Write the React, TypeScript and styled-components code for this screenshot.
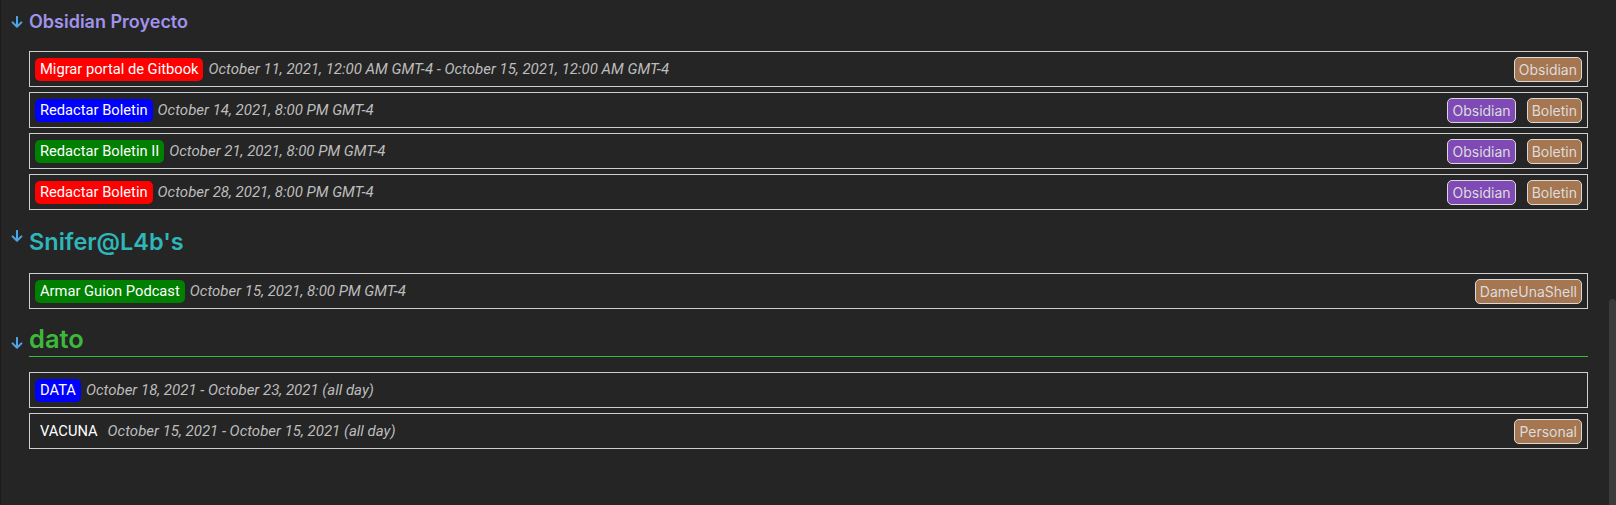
import React from "react";
import styled, { createGlobalStyle } from "styled-components";

const Global = createGlobalStyle`
  html, body { margin: 0; padding: 0; background: #252525; }
  body { font-family: Inter, "Noto Sans", sans-serif; }
`;

const Page = styled.div`
  display: flex;
  height: 505px;
  background: #252525;
  border-left: 1px solid #1b1b1b;
  box-sizing: border-box;
  overflow: hidden;
`;

const Main = styled.main`
  flex: 1;
  padding: 9px 21px 0 10px;
  display: flex;
  flex-direction: column;
`;

const ScrollTrack = styled.div`
  width: 7px;
  display: flex;
  flex-direction: column;
`;

const Thumb = styled.div`
  margin-top: 299px;
  flex: 1;
  background: #3b3b3b;
  border-radius: 4px 4px 0 0;
`;

const Section = styled.section<{ $mt: number }>`
  margin-top: ${(p) => p.$mt}px;
  display: flex;
  flex-direction: column;
`;

const HeadingRow = styled.div`
  display: flex;
  align-items: flex-start;
`;

const Fold = styled.span<{ $top: number }>`
  width: 18px;
  flex: none;
  padding-top: ${(p) => p.$top}px;
  display: flex;
`;

const Title = styled.h2<{ $size: number; $lh: number; $color: string; $rule?: boolean }>`
  flex: 1;
  margin: 0;
  font-family: Inter, sans-serif;
  font-weight: 600;
  font-size: ${(p) => p.$size}px;
  line-height: ${(p) => p.$lh}px;
  color: ${(p) => p.$color};
  ${(p) => (p.$rule ? "border-bottom: 1px solid #3dba3a; padding-bottom: 1px;" : "")}
`;

const List = styled.div<{ $mt: number }>`
  margin: ${(p) => p.$mt}px 0 0 18px;
  display: flex;
  flex-direction: column;
  gap: 5px;
`;

const Row = styled.div`
  display: flex;
  align-items: center;
  height: 36px;
  box-sizing: border-box;
  border: 1px solid #cfcfcf;
  padding: 0 5px;
`;

const Pill = styled.span<{ $bg: string }>`
  display: inline-flex;
  align-items: center;
  height: 23px;
  padding: 0 5px;
  border-radius: 5px;
  background: ${(p) => p.$bg};
  color: #ffffff;
  font-family: Roboto, sans-serif;
  font-size: 14.7px;
  white-space: nowrap;
`;

const When = styled.span`
  margin-left: 5px;
  color: #bdbdbd;
  font-family: Roboto, sans-serif;
  font-style: italic;
  font-size: 15px;
  white-space: nowrap;
`;

const Tags = styled.div`
  margin-left: auto;
  display: flex;
  gap: 11px;
`;

const Tag = styled.span<{ $bg: string }>`
  display: inline-flex;
  align-items: center;
  height: 25px;
  box-sizing: border-box;
  padding: 0 4px;
  border: 1px solid #d9d9d9;
  border-radius: 5px;
  background: ${(p) => p.$bg};
  color: #dcdcdc;
  font-family: Inter, sans-serif;
  font-size: 14px;
`;

const BROWN = "#a57650";
const PURPLE = "#7f4ab6";

const Arrow = () => (
  <svg width="12" height="12" viewBox="0 0 12 12" fill="none">
    <path d="M6 0.8v10M1.6 6.4L6 10.8l4.4-4.4" stroke="#4ea4e6" strokeWidth="2" strokeLinecap="round" strokeLinejoin="round" />
  </svg>
);

type Ev = { title: string; bg: string; when: string; tags: { label: string; bg: string }[] };

const obsidian: Ev[] = [
  {
    title: "Migrar portal de Gitbook",
    bg: "#ff0000",
    when: "October 11, 2021, 12:00 AM GMT-4 - October 15, 2021, 12:00 AM GMT-4",
    tags: [{ label: "Obsidian", bg: BROWN }],
  },
  {
    title: "Redactar Boletin",
    bg: "#0000ff",
    when: "October 14, 2021, 8:00 PM GMT-4",
    tags: [
      { label: "Obsidian", bg: PURPLE },
      { label: "Boletin", bg: BROWN },
    ],
  },
  {
    title: "Redactar Boletin II",
    bg: "#008000",
    when: "October 21, 2021, 8:00 PM GMT-4",
    tags: [
      { label: "Obsidian", bg: PURPLE },
      { label: "Boletin", bg: BROWN },
    ],
  },
  {
    title: "Redactar Boletin",
    bg: "#ff0000",
    when: "October 28, 2021, 8:00 PM GMT-4",
    tags: [
      { label: "Obsidian", bg: PURPLE },
      { label: "Boletin", bg: BROWN },
    ],
  },
];

const snifer: Ev[] = [
  {
    title: "Armar Guion Podcast",
    bg: "#008000",
    when: "October 15, 2021, 8:00 PM GMT-4",
    tags: [{ label: "DameUnaShell", bg: BROWN }],
  },
];

const dato: Ev[] = [
  { title: "DATA", bg: "#0000ff", when: "October 18, 2021 - October 23, 2021 (all day)", tags: [] },
  {
    title: "VACUNA",
    bg: "transparent",
    when: "October 15, 2021 - October 15, 2021 (all day)",
    tags: [{ label: "Personal", bg: BROWN }],
  },
];

const Events = ({ items, mt }: { items: Ev[]; mt: number }) => (
  <List $mt={mt}>
    {items.map((e, i) => (
      <Row key={i}>
        <Pill $bg={e.bg}>{e.title}</Pill>
        <When>{e.when}</When>
        {e.tags.length > 0 && (
          <Tags>
            {e.tags.map((t, j) => (
              <Tag key={j} $bg={t.bg}>
                {t.label}
              </Tag>
            ))}
          </Tags>
        )}
      </Row>
    ))}
  </List>
);

export default function App() {
  return (
    <>
      <Global />
      <Page>
        <Main>
          <Section $mt={0}>
            <HeadingRow>
              <Fold $top={7}>
                <Arrow />
              </Fold>
              <Title $size={18} $lh={26} $color="#a093ec">
                Obsidian Proyecto
              </Title>
            </HeadingRow>
            <Events items={obsidian} mt={16} />
          </Section>
          <Section $mt={16}>
            <HeadingRow>
              <Fold $top={4}>
                <Arrow />
              </Fold>
              <Title $size={23.5} $lh={32} $color="#2fb6b9">
                Snifer@L4b's
              </Title>
            </HeadingRow>
            <Events items={snifer} mt={15} />
          </Section>
          <Section $mt={14}>
            <HeadingRow>
              <Fold $top={14}>
                <Arrow />
              </Fold>
              <Title $size={25.5} $lh={32} $color="#3cb93a" $rule>
                dato
              </Title>
            </HeadingRow>
            <Events items={dato} mt={15} />
          </Section>
        </Main>
        <ScrollTrack>
          <Thumb />
        </ScrollTrack>
      </Page>
    </>
  );
}
